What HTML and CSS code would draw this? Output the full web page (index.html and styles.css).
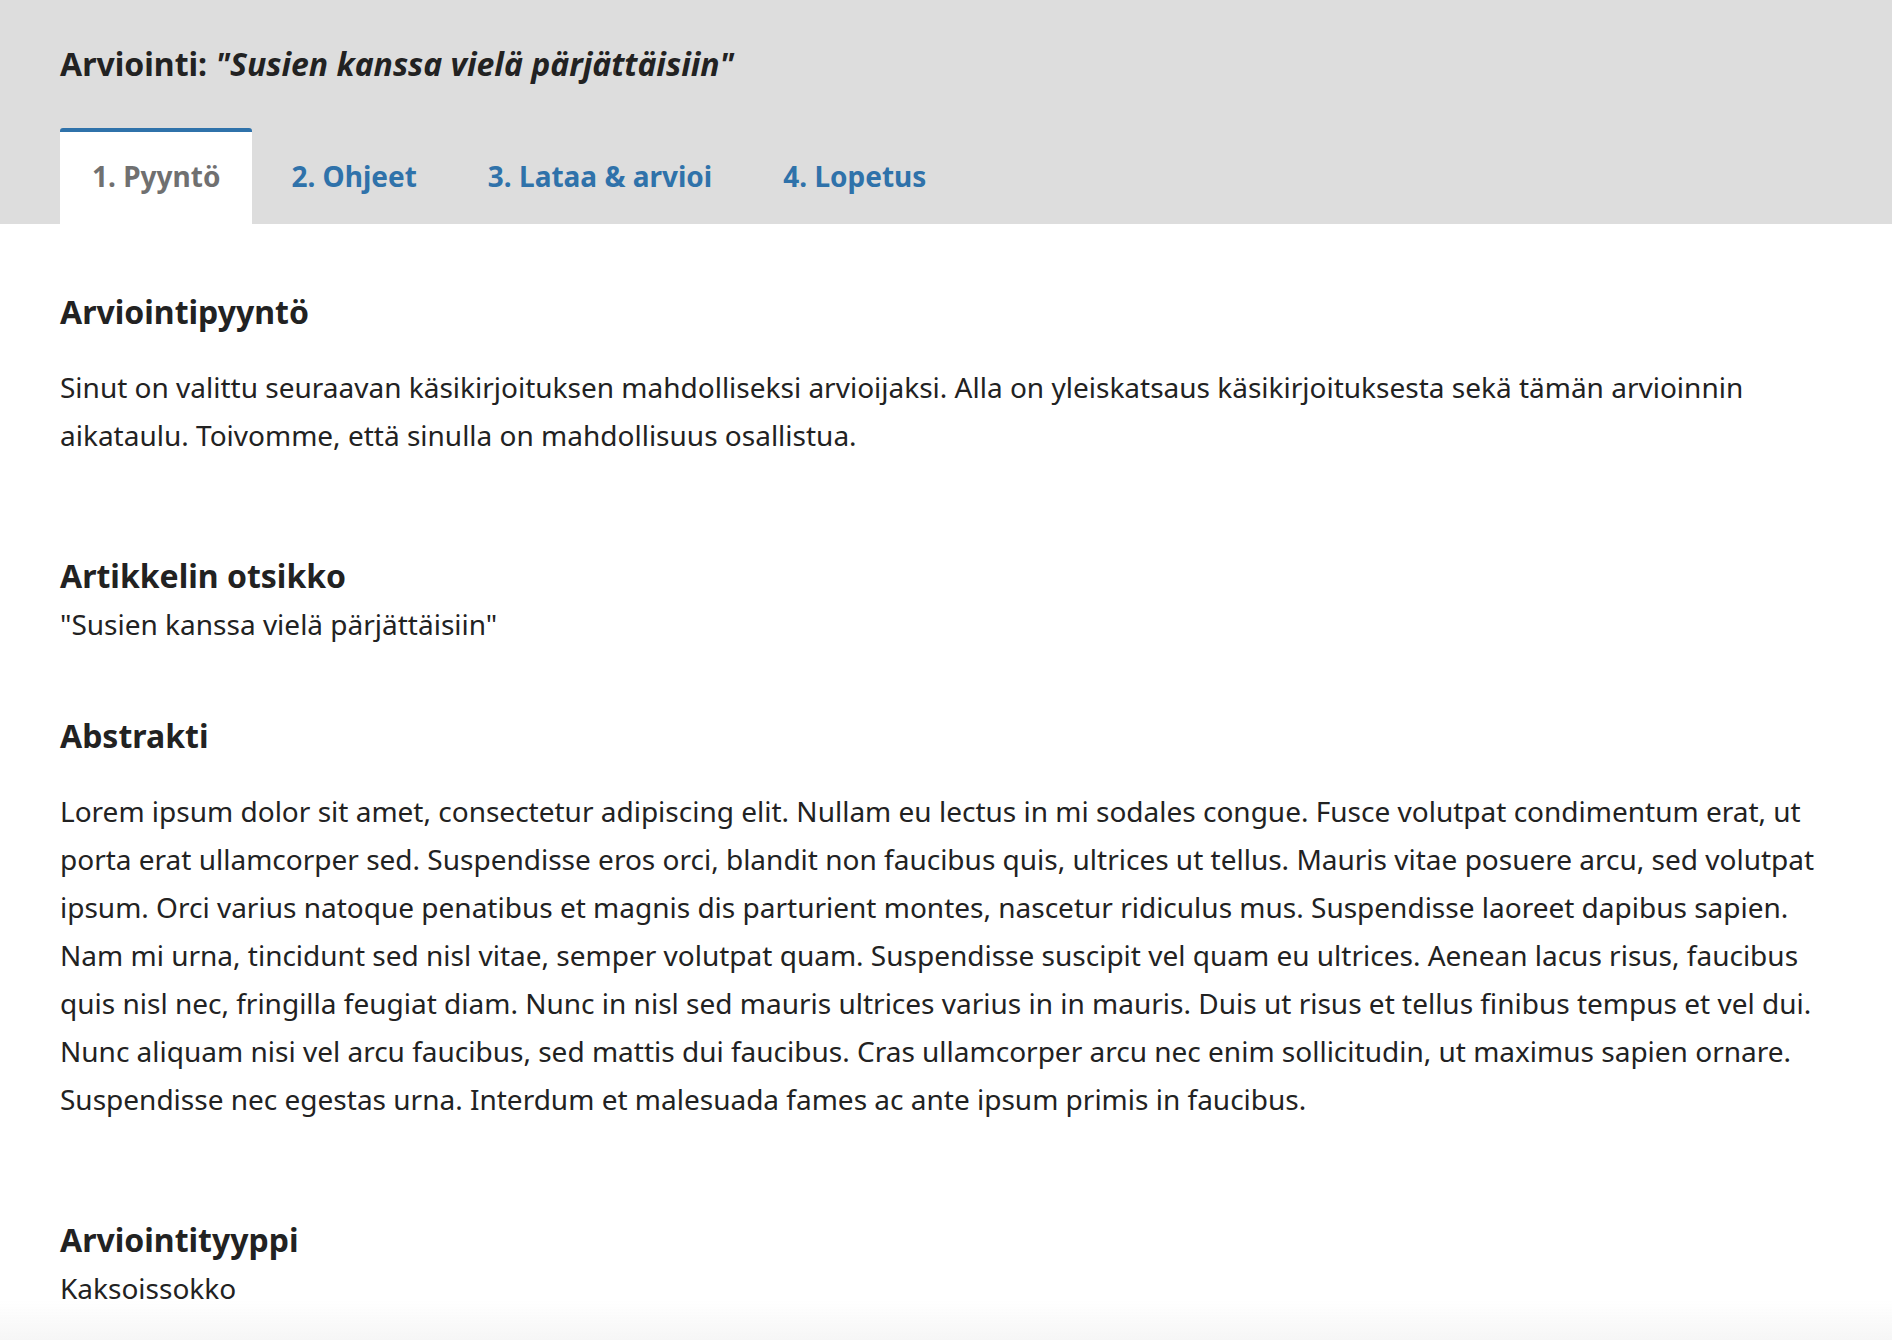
FILE: index.html
```html
<!DOCTYPE html>
<html lang="fi">
<head>
<meta charset="utf-8">
<title>Arviointi</title>
<link rel="stylesheet" href="styles.css">
</head>
<body>
<header class="page-header">
  <h1 class="page-title">Arviointi: <em>"Susien kanssa vielä pärjättäisiin"</em></h1>
  <nav class="tabs">
    <a class="tab tab-active">1. Pyyntö</a>
    <a class="tab">2. Ohjeet</a>
    <a class="tab">3. Lataa &amp; arvioi</a>
    <a class="tab">4. Lopetus</a>
  </nav>
</header>
<main class="content">
  <section class="block block-intro">
    <h2 class="heading">Arviointipyyntö</h2>
    <p class="para">Sinut on valittu seuraavan käsikirjoituksen mahdolliseksi arvioijaksi. Alla on yleiskatsaus käsikirjoituksesta sekä tämän arvioinnin aikataulu. Toivomme, että sinulla on mahdollisuus osallistua.</p>
  </section>
  <section class="block block-title">
    <h3 class="label">Artikkelin otsikko</h3>
    <div class="value">"Susien kanssa vielä pärjättäisiin"</div>
  </section>
  <section class="block block-abstract">
    <h3 class="label">Abstrakti</h3>
    <p class="para">Lorem ipsum dolor sit amet, consectetur adipiscing elit. Nullam eu lectus in mi sodales congue. Fusce volutpat condimentum erat, ut porta erat ullamcorper sed. Suspendisse eros orci, blandit non faucibus quis, ultrices ut tellus. Mauris vitae posuere arcu, sed volutpat ipsum. Orci varius natoque penatibus et magnis dis parturient montes, nascetur ridiculus mus. Suspendisse laoreet dapibus sapien. Nam mi urna, tincidunt sed nisl vitae, semper volutpat quam. Suspendisse suscipit vel quam eu ultrices. Aenean lacus risus, faucibus quis nisl nec, fringilla feugiat diam. Nunc in nisl sed mauris ultrices varius in in mauris. Duis ut risus et tellus finibus tempus et vel dui. Nunc aliquam nisi vel arcu faucibus, sed mattis dui faucibus. Cras ullamcorper arcu nec enim sollicitudin, ut maximus sapien ornare. Suspendisse nec egestas urna. Interdum et malesuada fames ac ante ipsum primis in faucibus.</p>
  </section>
  <section class="block block-type">
    <h3 class="label">Arviointityyppi</h3>
    <div class="value">Kaksoissokko</div>
  </section>
</main>
<div class="bottom-fade"></div>
</body>
</html>
```
FILE: styles.css
```css
html, body {
  margin: 0;
  padding: 0;
  background: #fff;
  color: #222;
  font-family: "Noto Sans", "Open Sans", sans-serif;
}

.page-header {
  background: #ddd;
  padding: 0 60px;
}

.page-title {
  margin: 0;
  padding-top: 44px;
  font-size: 32px;
  font-weight: 700;
  line-height: 40px;
  color: #222;
}

.page-title em {
  font-style: italic;
}

.tabs {
  display: flex;
  gap: 7px;
  margin-top: 44px;
}

.tab {
  display: block;
  padding: 0 32px;
  height: 96px;
  line-height: 88px;
  box-sizing: border-box;
  border-top: 4px solid transparent;
  font-size: 28px;
  font-weight: 700;
  color: #2f72aa;
  text-decoration: none;
}

.tab-active {
  background: #fff;
  color: #707070;
  border-top-color: #2f72aa;
  border-radius: 3px 3px 0 0;
}

.content {
  padding: 64px 60px 40px;
}

.block {
  margin: 0;
}

.heading,
.label {
  margin: 0;
  font-size: 32px;
  font-weight: 700;
  line-height: 48px;
  color: #222;
}

.para {
  margin: 27px 0 0;
  font-size: 28px;
  line-height: 48px;
}

.value {
  font-size: 28px;
  line-height: 48px;
}

.block-title {
  margin-top: 93px;
}

.block-abstract {
  margin-top: 64px;
}

.block-type {
  margin-top: 93px;
}

.bottom-fade {
  position: fixed;
  left: 0;
  right: 0;
  bottom: 0;
  height: 40px;
  background: linear-gradient(to bottom, rgba(246,246,246,0), rgba(246,246,246,1));
  pointer-events: none;
}
```
